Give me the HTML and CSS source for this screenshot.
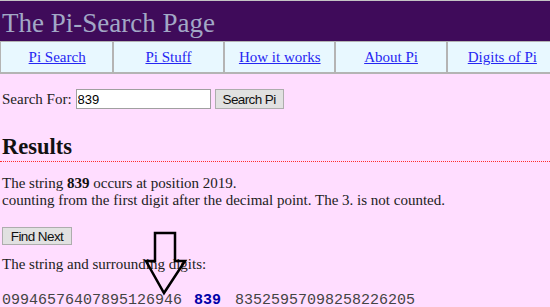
FILE: index.html
```html
<!DOCTYPE html>
<html lang="en">
<head>
    <meta charset="UTF-8">
    <meta name="viewport" content="width=device-width, initial-scale=1.0">
    <title>The Pi-Search Page</title>
    <link rel="stylesheet" href="styles.css">
</head>
<body>
    <header>
        <h1>The Pi-Search Page</h1>
    </header>
    <nav class="menu">
        <div class="menu-cell"><a href="#">Pi Search</a></div>
        <div class="menu-cell"><a href="#">Pi Stuff</a></div>
        <div class="menu-cell"><a href="#">How it works</a></div>
        <div class="menu-cell"><a href="#">About Pi</a></div>
        <div class="menu-cell"><a href="#">Digits of Pi</a></div>
    </nav>
    <div class="content">
        <form class="search">
            <label for="query">Search For:</label>
            <input type="text" id="query" value="839">
            <button type="button" class="search-btn">Search Pi</button>
        </form>
        <h2>Results</h2>
        <p class="result">The string <strong>839</strong> occurs at position 2019.<br>
        counting from the first digit after the decimal point. The 3. is not counted.</p>
        <button type="button" class="next-btn">Find Next</button>
        <p class="surround">The string and surrounding digits:</p>
        <div class="digits">09946576407895126946 <span class="hit">839</span> 83525957098258226205</div>
    </div>
    <svg class="arrow" width="56" height="72" viewBox="0 0 56 72">
        <polygon points="15,5 35,5 35,33 45,33 24,65 6,33 15,33" fill="none" stroke="#000" stroke-width="2.5" stroke-linejoin="miter"/>
    </svg>
</body>
</html>
```

FILE: styles.css
```css
body {
    margin: 0;
    background-color: #ffddff;
    font-family: "Liberation Serif", "Times New Roman", serif;
    font-size: 15px;
    color: #222;
    overflow-x: hidden;
    position: relative;
}
header {
    background-color: #3f0b5a;
    border-top: 1px solid #c4c4c4;
    height: 40px;
}
header h1 {
    margin: 0;
    padding: 2px 0 0 2px;
    font-size: 27px;
    font-weight: normal;
    line-height: 40px;
    color: #a2a8c6;
    white-space: nowrap;
}
.menu {
    display: flex;
    width: 570px;
    background-color: #e8f8ff;
    border-top: 1px solid #b4b4b4;
    border-bottom: 2px solid #b4b4b4;
    border-left: 1px solid #b4b4b4;
    padding-left: 1.5px;
}
.menu-cell {
    flex: 0 0 111.3px;
    box-sizing: border-box;
    border-right: 2px solid #b4b4b4;
    text-align: center;
    height: 30px;
    line-height: 30px;
}
.menu-cell a {
    color: #2626f2;
}
.content {
    padding: 0 2px;
}
.search {
    display: flex;
    align-items: center;
    margin: 15px 0 0;
    height: 20px;
}
.search label {
    margin-right: 4px;
}
.search input {
    box-sizing: border-box;
    width: 135px;
    height: 20px;
    margin: 0 4px 0 0;
    padding: 0 1px;
    border: 1px solid #a0a0a0;
    background: #fff;
    font-family: "Liberation Sans", Arial, sans-serif;
    font-size: 13px;
    color: #000;
}
.search-btn, .next-btn {
    box-sizing: border-box;
    margin: 0;
    border: 1px solid #adadad;
    background-color: #e1e1e1;
    font-family: "Liberation Sans", Arial, sans-serif;
    font-size: 13.5px;
    letter-spacing: -0.6px;
    color: #111;
    padding: 0;
}
.search-btn {
    width: 69px;
    height: 20px;
}
.next-btn {
    display: block;
    width: 70px;
    height: 18px;
    margin-top: 18px;
}
h2 {
    margin: 25px -2px 0;
    padding: 0 2px 1px;
    font-size: 22.5px;
    line-height: 26px;
    color: #111;
    border-bottom: 1px dotted #ff2d2d;
}
p {
    margin: 0;
    line-height: 17px;
}
.result {
    margin-top: 13px;
}
.result strong {
    color: #111;
}
.surround {
    margin-top: 11px;
}
.digits {
    margin-top: 19px;
    font-family: "Liberation Mono", "Courier New", monospace;
    font-size: 15px;
    line-height: 17px;
    color: #444;
    white-space: nowrap;
}
.hit {
    font-weight: bold;
    color: #0000a8;
    margin: 0 5px 0 3px;
}
.arrow {
    position: absolute;
    left: 140px;
    top: 228px;
}
```
